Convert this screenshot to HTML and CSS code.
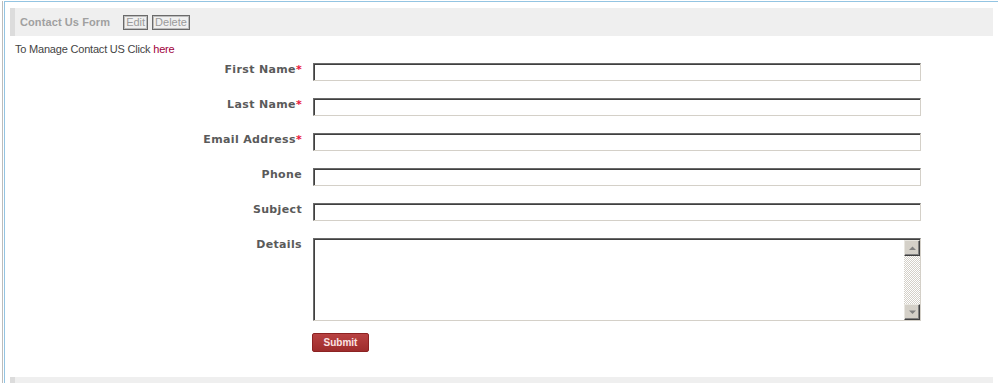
FILE: index.html
```html
<!DOCTYPE html>
<html lang="en">
<head>
    <meta charset="UTF-8">
    <title>Contact Us Form</title>
    <link rel="stylesheet" href="styles.css">
</head>
<body>
    <div class="frame">
        <div class="panel">
            <div class="section-head">
                <h2 class="section-title">Contact Us Form</h2>
                <div class="head-actions">
                    <button class="mini-btn">Edit</button>
                    <button class="mini-btn">Delete</button>
                </div>
            </div>

            <p class="manage">To Manage Contact US Click <a href="#">here</a></p>

            <form class="contact-form">
                <div class="form-row">
                    <label>First Name<span class="req">*</span></label>
                    <input type="text" class="field">
                </div>
                <div class="form-row">
                    <label>Last Name<span class="req">*</span></label>
                    <input type="text" class="field">
                </div>
                <div class="form-row">
                    <label>Email Address<span class="req">*</span></label>
                    <input type="text" class="field">
                </div>
                <div class="form-row">
                    <label>Phone</label>
                    <input type="text" class="field">
                </div>
                <div class="form-row">
                    <label>Subject</label>
                    <input type="text" class="field">
                </div>
                <div class="form-row">
                    <label>Details</label>
                    <div class="area-box">
                        <textarea class="area"></textarea>
                        <div class="scrollbar">
                            <div class="sb-btn">
                                <svg width="7" height="5" viewBox="0 0 7 5"><polygon points="3.5,0.5 7,4 0,4" fill="#808080"/></svg>
                            </div>
                            <div class="sb-track"></div>
                            <div class="sb-btn">
                                <svg width="7" height="5" viewBox="0 0 7 5"><polygon points="0,0.5 7,0.5 3.5,4" fill="#808080"/></svg>
                            </div>
                        </div>
                    </div>
                </div>
                <div class="form-row submit-row">
                    <span class="spacer"></span>
                    <button type="button" class="submit-btn">Submit</button>
                </div>
            </form>

            <div class="section-head"></div>
        </div>
    </div>
</body>
</html>
```

FILE: styles.css
```css
* {
    margin: 0;
    padding: 0;
    box-sizing: border-box;
}
body {
    font-family: "Liberation Sans", Arial, sans-serif;
    font-size: 11px;
    color: #333;
    background-color: #fff;
    overflow: hidden;
}
.frame {
    margin-left: 2px;
    border-left: 1px solid #bcbcbc;
    min-height: 100vh;
}
.panel {
    margin: 1px 0 0 1px;
    border-left: 1px solid #93c4e2;
    border-top: 1px solid #93c4e2;
    padding: 6px 5px 0 5px;
    min-height: 100vh;
}
.section-head {
    height: 28px;
    background-color: #efefef;
    border-left: 5px solid #dcdcdc;
    padding-left: 5px;
    display: flex;
    align-items: center;
}
.section-title {
    font-size: 11px;
    font-weight: bold;
    color: #a0a0a0;
    letter-spacing: 0.1px;
}
.head-actions {
    display: flex;
    gap: 4px;
    margin-left: 13px;
}
.mini-btn {
    font-family: "Liberation Sans", Arial, sans-serif;
    font-size: 11px;
    color: #9a9a9a;
    background: #f0f0f0;
    border: 1px solid #6a6a6a;
    box-shadow: inset 0 0 0 1px #bcbcbc;
    height: 15px;
    line-height: 11px;
    padding: 0 2px;
}
.manage {
    margin-top: 7px;
    padding-left: 5px;
    line-height: 13px;
    color: #444;
    letter-spacing: -0.2px;
}
.manage a {
    color: #a0003c;
    text-decoration: none;
}
.contact-form {
    margin-top: 7px;
}
.form-row {
    display: flex;
    align-items: flex-start;
    margin-bottom: 17px;
}
.form-row label {
    width: 292px;
    text-align: right;
    font-family: "DejaVu Sans", Verdana, sans-serif;
    font-size: 11px;
    font-weight: bold;
    color: #5a5a5a;
    line-height: 13px;
    letter-spacing: 0.35px;
}
.req {
    color: #e8143c;
}
.field {
    margin-left: 11px;
    width: 608px;
    height: 18px;
    border: 1px solid;
    border-color: #6a6a6a #d4d0c8 #d4d0c8 #6a6a6a;
    box-shadow: inset 1px 1px 0 #404040;
    background: #fff;
    outline: none;
}
.area-box {
    margin-left: 11px;
    width: 608px;
    height: 83px;
    display: flex;
    border: 1px solid;
    border-color: #6a6a6a #d4d0c8 #d4d0c8 #6a6a6a;
    box-shadow: inset 1px 1px 0 #404040;
    padding: 1px 0 0 1px;
    background: #fff;
}
.area {
    flex-grow: 1;
    border: none;
    resize: none;
    outline: none;
    background: transparent;
}
.scrollbar {
    width: 16px;
    display: flex;
    flex-direction: column;
}
.sb-btn {
    width: 16px;
    height: 16px;
    background-color: #d4d0c8;
    border: 1px solid;
    border-color: #e8e6e0 #404040 #404040 #e8e6e0;
    box-shadow: inset -1px -1px 0 #808080;
    display: flex;
    align-items: center;
    justify-content: center;
}
.sb-track {
    flex-grow: 1;
    background: repeating-conic-gradient(#d4d0c8 0 25%, #fff 0 50%) 0 0 / 2px 2px;
}
.submit-row {
    margin-top: -5px;
    margin-bottom: 25px;
}
.spacer {
    width: 292px;
}
.submit-btn {
    margin-left: 10px;
    width: 57px;
    height: 19px;
    font-family: "Liberation Sans", Arial, sans-serif;
    font-size: 10px;
    font-weight: bold;
    color: #fbe3e3;
    background: linear-gradient(#b84242, #9e2c2c);
    border: 1px solid #8c2222;
    border-radius: 2px;
}
```
